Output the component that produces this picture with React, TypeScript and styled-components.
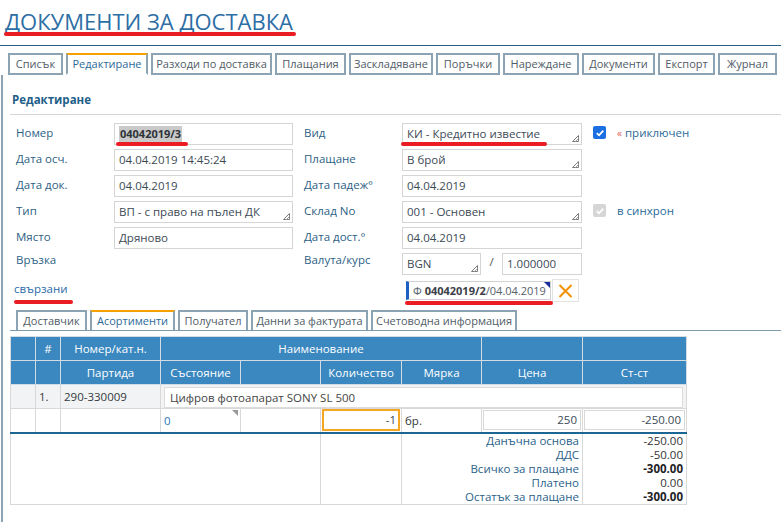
import React from "react";
import styled, { createGlobalStyle } from "styled-components";

const GlobalStyle = createGlobalStyle`
  html, body {
    margin: 0;
    padding: 0;
    background: #fff;
  }
  body {
    font-family: "Open Sans", "Noto Sans", sans-serif;
    font-size: 11.5px;
    color: #3c4a56;
  }
  * {
    box-sizing: border-box;
  }
`;

const Page = styled.div`
  width: 781px;
  height: 522px;
  overflow: hidden;
  display: flex;
  flex-direction: column;
`;

const Header = styled.header`
  padding: 5px 0 8px 5px;
  border-bottom: 1px solid #2b6085;
`;

const Title = styled.h1`
  position: relative;
  display: inline-block;
  margin: 0;
  font-size: 22px;
  line-height: 32px;
  font-weight: 400;
  color: #2d6ea5;
`;

// red annotation strokes drawn over the screenshot
const Mark = styled.span<{ $x: number; $y: number; $w: number }>`
  position: absolute;
  left: ${(p) => p.$x}px;
  top: ${(p) => p.$y}px;
  width: ${(p) => p.$w}px;
  height: 4px;
  border-radius: 2px;
  background: #ea1c24;
  pointer-events: none;
`;

const TabBar = styled.nav`
  display: flex;
  align-items: flex-start;
  gap: 3px;
  margin: 7px 0 0 8px;
  height: 22px;
`;

const Tab = styled.div<{ $active?: boolean; $w: number }>`
  width: ${(p) => p.$w}px;
  height: 22px;
  border: 2px solid #8ba3b3;
  border-top-color: ${(p) => (p.$active ? "#f5a200" : "#8ba3b3")};
  border-bottom-color: ${(p) => (p.$active ? "#fff" : "#8ba3b3")};
  background: #fff;
  font-size: 11px;
  line-height: 18px;
  text-align: center;
  color: ${(p) => (p.$active ? "#2b6a98" : "#505c66")};
  white-space: nowrap;
`;

const Panel = styled.section`
  flex: 1;
  margin-left: 1px;
  border-left: 2px solid #8ba3b3;
  padding-left: 7px;
`;

const SectionTitle = styled.h2`
  margin: 17px 0 0;
  padding: 0 0 6px 2px;
  font-size: 11.5px;
  line-height: 16px;
  font-weight: 700;
  color: #1f5f8a;
  border-bottom: 1px solid #d6d6d6;
`;

const Form = styled.div`
  display: grid;
  grid-template-columns: 87px 179px 87px 180px 13px 1fr;
  grid-auto-rows: 22px;
  column-gap: 11px;
  row-gap: 4px;
  margin: 8px 0 0 6px;
`;

const Label = styled.div<{ $high?: boolean }>`
  position: relative;
  line-height: ${(p) => (p.$high ? "14px" : "20px")};
  color: #2d5f86;
  white-space: nowrap;
`;

const LinkLabel = styled.span`
  position: relative;
  margin-left: -2px;
  color: #2a6aa8;
`;

const Field = styled.div<{ $w?: number }>`
  position: relative;
  width: ${(p) => (p.$w ? `${p.$w}px` : "auto")};
  height: 22px;
  border: 1px solid #d5d5d5;
  background: #fff;
  padding: 0 4px;
  line-height: 20px;
  color: #3c4a56;
  white-space: nowrap;
`;

const Selected = styled.span`
  display: inline-block;
  padding: 0 1px;
  line-height: 16px;
  vertical-align: middle;
  margin-top: -2px;
  background: #c9c9c9;
  font-weight: 700;
  font-size: 11px;
  color: #2e3338;
`;

const GripIcon = styled.svg`
  position: absolute;
  right: 2px;
  bottom: 2px;
`;

const Grip = () => (
  <GripIcon width="7" height="7" viewBox="0 0 7 7">
    <path d="M6.5 0.5V6.5H0.5Z" fill="none" stroke="#7d7d7d" strokeWidth="1" />
    <path d="M3.5 6.5L6.5 3.5" fill="none" stroke="#a0a0a0" strokeWidth="1" />
  </GripIcon>
);

const Check = styled.span<{ $disabled?: boolean }>`
  display: flex;
  align-items: center;
  justify-content: center;
  width: 13px;
  height: 13px;
  margin-top: 3px;
  border-radius: 2px;
  background: ${(p) => (p.$disabled ? "#d6d6d6" : "#1b6fe2")};
`;

const CheckMark = () => (
  <svg width="10" height="10" viewBox="0 0 10 10">
    <path d="M1.8 5.2L4 7.3L8.3 2.6" fill="none" stroke="#fff" strokeWidth="1.8" />
  </svg>
);

const CheckText = styled.div`
  line-height: 20px;
  color: #2b6a98;
  white-space: nowrap;
`;

const Guillemet = styled.span`
  color: #e25b5b;
  font-size: 10px;
  margin-right: 3px;
`;

const Pair = styled.div`
  display: flex;
  justify-content: space-between;
  align-items: flex-start;
`;

const Slash = styled.span`
  line-height: 18px;
  color: #555;
`;

const LinkRow = styled.div`
  display: flex;
  align-items: flex-start;
  gap: 1px;
  padding-left: 4px;
`;

const LinkBox = styled.div`
  position: relative;
  width: 145px;
  height: 19px;
  margin-top: 2px;
  border: 1px solid #d2d2d2;
  border-left: 3px solid #1d5fc2;
  padding-left: 4px;
  font-size: 11px;
  line-height: 17px;
  color: #56616b;
  white-space: nowrap;

  b {
    color: #3a4048;
  }

  &::after {
    content: "";
    position: absolute;
    top: 0;
    right: 0;
    border-top: 6px solid #1a2d9e;
    border-left: 6px solid transparent;
  }
`;

const CloseButton = styled.div`
  display: flex;
  align-items: center;
  justify-content: center;
  width: 27px;
  height: 23px;
  border: 1px solid #e3e3e3;
  background: #fff;
`;

const SubTabBar = styled.div`
  display: flex;
  align-items: flex-end;
  gap: 3px;
  height: 21px;
  margin-top: 9px;
  padding-left: 6px;
  border-bottom: 1px solid #7f9cae;
`;

const SubTab = styled(Tab)`
  height: 20px;
  border-bottom: none;
  line-height: 17px;
`;

const Grid = styled.table`
  width: 676px;
  margin-top: 5px;
  border-collapse: collapse;
  table-layout: fixed;
  font-size: 11.5px;
`;

const HeadCell = styled.th`
  height: 24px;
  padding: 0;
  border: 1px solid #d3dce3;
  background: #3a88bf;
  color: #fff;
  font-weight: 400;
  text-align: center;
`;

const Cell = styled.td<{ $shade?: boolean; $align?: string }>`
  position: relative;
  height: 24px;
  padding: 0 3px;
  border: 1px solid #d8d8d8;
  background: ${(p) => (p.$shade ? "#f2f3f5" : "#fff")};
  text-align: ${(p) => p.$align || "left"};
  color: #333a40;
  white-space: nowrap;
`;

const InputCell = styled(Cell)`
  padding: 0;
`;

const NameBox = styled.div`
  height: 21px;
  margin: 1px 0 0;
  border: 1px solid #dcdcdc;
  background: #fff;
  padding-left: 5px;
  line-height: 19px;
  color: #444;
`;

const ValueBox = styled.div<{ $accent?: boolean }>`
  height: ${(p) => (p.$accent ? "22px" : "20px")};
  margin: ${(p) => (p.$accent ? "0 1px" : "1px")};
  border: ${(p) => (p.$accent ? "2px solid #f5a623" : "1px solid #d8d8d8")};
  padding-right: ${(p) => (p.$accent ? "2px" : "3px")};
  line-height: 18px;
  text-align: right;
  color: #3c4a56;
`;

const StateValue = styled.span`
  color: #2878c0;

  &::after {
    content: "";
    position: absolute;
    top: 1px;
    right: 2px;
    border-top: 6px solid #9a9a9a;
    border-left: 6px solid transparent;
  }
`;

const TotalsCell = styled.td<{ $kind?: "label" | "value" }>`
  height: 70px;
  padding: 0 3px 0 0;
  border: 1px solid #d8d8d8;
  border-top: 2px solid #1d6592;
  vertical-align: top;
  text-align: right;
  line-height: 14px;
  color: ${(p) => (p.$kind === "label" ? "#2a5f8a" : "#333")};
`;

const TotalLine = styled.div<{ $strong?: boolean }>`
  font-weight: ${(p) => (p.$strong ? 700 : 400)};
  color: ${(p) => (p.$strong ? "#1e2226" : "inherit")};
`;

const mainTabs = [
  { name: "Списък", w: 55 },
  { name: "Редактиране", w: 82 },
  { name: "Разходи по доставка", w: 121 },
  { name: "Плащания", w: 71 },
  { name: "Заскладяване", w: 84 },
  { name: "Поръчки", w: 64 },
  { name: "Нареждане", w: 76 },
  { name: "Документи", w: 73 },
  { name: "Експорт", w: 57 },
  { name: "Журнал", w: 59 },
];

const subTabs = [
  { name: "Доставчик", w: 71 },
  { name: "Асортименти", w: 85 },
  { name: "Получател", w: 70 },
  { name: "Данни за фактурата", w: 117 },
  { name: "Счетоводна информация", w: 146 },
];

const totals = [
  { label: "Данъчна основа", value: "-250.00" },
  { label: "ДДС", value: "-50.00" },
  { label: "Всичко за плащане", value: "-300.00", strong: true },
  { label: "Платено", value: "0.00" },
  { label: "Остатък за плащане", value: "-300.00", strong: true },
];

const colWidths = [25, 25, 100, 80, 80, 81, 80, 101, 104];

export default function App() {
  return (
    <>
      <GlobalStyle />
      <Page>
        <Header>
          <Title>
            ДОКУМЕНТИ ЗА ДОСТАВКА
            <Mark $x={-1} $y={27} $w={292} />
          </Title>
        </Header>

        <TabBar>
          {mainTabs.map((t) => (
            <Tab key={t.name} $w={t.w} $active={t.name === "Редактиране"}>
              {t.name}
            </Tab>
          ))}
        </TabBar>

        <Panel>
          <SectionTitle>Редактиране</SectionTitle>

          <Form>
            <Label>Номер</Label>
            <Field>
              <Selected>04042019/3</Selected>
              <Mark $x={1} $y={18} $w={72} />
            </Field>
            <Label>Вид</Label>
            <Field>
              КИ - Кредитно известие
              <Grip />
              <Mark $x={-2} $y={18} $w={146} />
            </Field>
            <Check>
              <CheckMark />
            </Check>
            <CheckText>
              <Guillemet>«</Guillemet>приключен
            </CheckText>

            <Label>Дата осч.</Label>
            <Field>04.04.2019 14:45:24</Field>
            <Label>Плащане</Label>
            <Field>
              В брой
              <Grip />
            </Field>
            <span />
            <span />

            <Label>Дата док.</Label>
            <Field>04.04.2019</Field>
            <Label>Дата падеж°</Label>
            <Field>04.04.2019</Field>
            <span />
            <span />

            <Label>Тип</Label>
            <Field>
              ВП - с право на пълен ДК
              <Grip />
            </Field>
            <Label>Склад No</Label>
            <Field>
              001 - Основен
              <Grip />
            </Field>
            <Check $disabled>
              <CheckMark />
            </Check>
            <CheckText>в синхрон</CheckText>

            <Label>Място</Label>
            <Field>Дряново</Field>
            <Label>Дата дост.°</Label>
            <Field>04.04.2019</Field>
            <span />
            <span />

            <Label $high>Връзка</Label>
            <span />
            <Label $high>Валута/курс</Label>
            <Pair>
              <Field $w={79}>
                BGN
                <Grip />
              </Field>
              <Slash>/</Slash>
              <Field $w={80}>1.000000</Field>
            </Pair>
            <span />
            <span />

            <Label>
              <LinkLabel>
                свързани
                <Mark $x={0} $y={19} $w={59} />
              </LinkLabel>
            </Label>
            <span />
            <span />
            <LinkRow>
              <LinkBox>
                Ф <b>04042019/2</b>/04.04.2019
                <Mark $x={-4} $y={19} $w={148} />
              </LinkBox>
              <CloseButton>
                <svg width="15" height="14" viewBox="0 0 15 14">
                  <path
                    d="M1.5 1L13.5 13M13.5 1L1.5 13"
                    stroke="#f29100"
                    strokeWidth="2"
                    fill="none"
                  />
                </svg>
              </CloseButton>
            </LinkRow>
            <span />
            <span />
          </Form>

          <SubTabBar>
            {subTabs.map((t) => (
              <SubTab key={t.name} $w={t.w} $active={t.name === "Асортименти"}>
                {t.name}
              </SubTab>
            ))}
          </SubTabBar>

          <Grid>
            <colgroup>
              {colWidths.map((w, i) => (
                <col key={i} style={{ width: w }} />
              ))}
            </colgroup>
            <thead>
              <tr>
                <HeadCell />
                <HeadCell>#</HeadCell>
                <HeadCell>Номер/кат.н.</HeadCell>
                <HeadCell colSpan={4}>Наименование</HeadCell>
                <HeadCell />
                <HeadCell />
              </tr>
              <tr>
                <HeadCell />
                <HeadCell />
                <HeadCell>Партида</HeadCell>
                <HeadCell>Състояние</HeadCell>
                <HeadCell />
                <HeadCell>Количество</HeadCell>
                <HeadCell>Мярка</HeadCell>
                <HeadCell>Цена</HeadCell>
                <HeadCell>Ст-ст</HeadCell>
              </tr>
            </thead>
            <tbody>
              <tr>
                <Cell $shade />
                <Cell $shade>1.</Cell>
                <Cell $shade>290-330009</Cell>
                <Cell $shade colSpan={6}>
                  <NameBox>Цифров фотоапарат SONY SL 500</NameBox>
                </Cell>
              </tr>
              <tr>
                <Cell />
                <Cell />
                <Cell />
                <Cell>
                  <StateValue>0</StateValue>
                </Cell>
                <Cell />
                <InputCell>
                  <ValueBox $accent>-1</ValueBox>
                </InputCell>
                <Cell>бр.</Cell>
                <InputCell>
                  <ValueBox>250</ValueBox>
                </InputCell>
                <InputCell>
                  <ValueBox>-250.00</ValueBox>
                </InputCell>
              </tr>
              <tr>
                <TotalsCell colSpan={5} />
                <TotalsCell />
                <TotalsCell colSpan={2} $kind="label">
                  {totals.map((t) => (
                    <div key={t.label}>{t.label}</div>
                  ))}
                </TotalsCell>
                <TotalsCell $kind="value">
                  {totals.map((t) => (
                    <TotalLine key={t.label} $strong={t.strong}>
                      {t.value}
                    </TotalLine>
                  ))}
                </TotalsCell>
              </tr>
            </tbody>
          </Grid>
        </Panel>
      </Page>
    </>
  );
}
